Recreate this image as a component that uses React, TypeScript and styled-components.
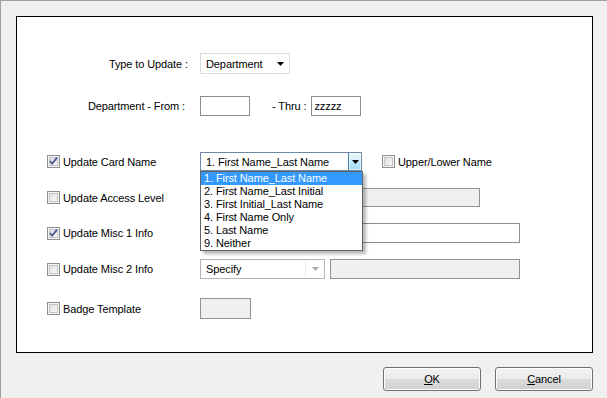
import React from "react";
import styled, { createGlobalStyle } from "styled-components";

const Global = createGlobalStyle`
  html, body { margin: 0; padding: 0; background: #f0f0f0; }
  body { font-family: "Liberation Sans", Arial, sans-serif; font-size: 11px; letter-spacing: -0.1px; color: #000; }
  * { box-sizing: border-box; }
`;

const Window = styled.div`
  width: 607px;
  height: 398px;
  border-top: 1px solid #a0a0a0;
  border-left: 1px solid #a0a0a0;
  background: #f0f0f0;
  padding: 15px 0 0 15px;
  display: flex;
  flex-direction: column;
`;

const Panel = styled.div`
  width: 577px;
  height: 337px;
  border: 1px solid #000;
  background: #fff;
  display: flex;
  flex-direction: column;
`;

const Row = styled.div<{ $mt: number; $h: number; $pl?: number }>`
  display: flex;
  align-items: center;
  margin-top: ${(p) => p.$mt}px;
  height: ${(p) => p.$h}px;
  padding-left: ${(p) => p.$pl ?? 0}px;
`;

const FieldLabel = styled.div<{ $pr: number }>`
  width: 183px;
  padding-right: ${(p) => p.$pr}px;
  text-align: right;
  white-space: nowrap;
`;

const InlineLabel = styled.div<{ $ml: number; $mr: number }>`
  margin-left: ${(p) => p.$ml}px;
  margin-right: ${(p) => p.$mr}px;
  white-space: nowrap;
`;

const CheckCell = styled.label<{ $w?: number; $ml?: number }>`
  display: flex;
  align-items: center;
  gap: 3px;
  width: ${(p) => (p.$w ? `${p.$w}px` : "auto")};
  margin-left: ${(p) => p.$ml ?? 0}px;
  white-space: nowrap;
`;

const BoxWrap = styled.span`
  display: inline-flex;
  width: 13px;
  height: 13px;
  flex: none;
`;

const PlainSelect = styled.div`
  width: 90px;
  height: 21px;
  border: 1px solid #dcdcdc;
  background: #fff;
  display: flex;
  align-items: center;
  justify-content: space-between;
  padding: 0 5px 0 5px;
`;

const TextBox = styled.div<{ $w: number; $h: number; $disabled?: boolean; $ml?: number }>`
  width: ${(p) => p.$w}px;
  height: ${(p) => p.$h}px;
  margin-left: ${(p) => p.$ml ?? 0}px;
  border: 1px solid ${(p) => (p.$disabled ? "#8f9398" : "#8a8d92")};
  background: ${(p) => (p.$disabled ? "#f0f0f0" : "#fff")};
  display: flex;
  align-items: center;
  padding-left: 2px;
`;

const ComboWrap = styled.div`
  position: relative;
  width: 162px;
  height: 19px;
`;

const OpenCombo = styled.div`
  width: 100%;
  height: 100%;
  border: 1px solid #6c8aa6;
  background: #fff;
  display: flex;
  align-items: stretch;
`;

const ComboText = styled.div`
  flex: 1;
  display: flex;
  align-items: center;
  padding-left: 5px;
  white-space: nowrap;
`;

const ComboButton = styled.div`
  width: 13px;
  border-left: 1px solid #3c7fb1;
  background: linear-gradient(#eaf6fd 0%, #d7effc 45%, #bde6fd 50%, #a6d9f4 100%);
  display: flex;
  align-items: center;
  justify-content: center;
  box-shadow: inset 0 0 0 1px rgba(255, 255, 255, 0.6);
`;

const DropList = styled.ul`
  position: absolute;
  top: 100%;
  left: 0;
  width: 163px;
  margin: 0;
  padding: 0;
  list-style: none;
  background: #fff;
  border: 1px solid #646464;
  box-shadow: 3px 3px 3px rgba(0, 0, 0, 0.28);
  z-index: 5;
`;

const DropItem = styled.li<{ $active?: boolean }>`
  height: 13px;
  line-height: 13px;
  padding-left: 3px;
  white-space: nowrap;
  background: ${(p) => (p.$active ? "#3399ff" : "transparent")};
  color: ${(p) => (p.$active ? "#fff" : "#000")};
`;

const DisabledCombo = styled.div`
  width: 125px;
  height: 20px;
  border: 1px solid #b4b4b4;
  background: #fff;
  display: flex;
  align-items: stretch;
`;

const DisabledButton = styled.div`
  width: 19px;
  border-left: 1px solid #ececec;
  display: flex;
  align-items: center;
  justify-content: center;
`;

const Footer = styled.div`
  display: flex;
  gap: 14px;
  width: 577px;
  justify-content: flex-end;
  margin-top: 14px;
`;

const Button = styled.button`
  width: 98px;
  height: 24px;
  border: 1px solid #707070;
  border-radius: 3px;
  background: linear-gradient(#f2f2f2 0%, #ebebeb 48%, #dddddd 52%, #cfcfcf 100%);
  box-shadow: inset 0 0 0 1px #fcfcfc;
  font-family: "Liberation Sans", Arial, sans-serif;
  font-size: 11px;
  letter-spacing: -0.1px;
  color: #000;
  padding: 0;
  u { text-decoration: underline; }
`;

const Check = ({ checked }: { checked?: boolean }) => (
  <BoxWrap>
    <svg width="13" height="13" viewBox="0 0 13 13">
      <defs>
        <linearGradient id="cbg" x1="0" y1="0" x2="1" y2="1">
          <stop offset="0" stopColor="#dcdcdc" />
          <stop offset="1" stopColor="#fbfbfb" />
        </linearGradient>
      </defs>
      <rect x="0.5" y="0.5" width="12" height="12" fill="#f4f4f4" stroke="#8e8f8f" />
      <rect x="2.5" y="2.5" width="8" height="8" fill="url(#cbg)" stroke="#c6c6c6" />
      {checked && (
        <path d="M3 6.2 L5.2 8.6 L10 2.6" fill="none" stroke="#4a5f97" strokeWidth="1.8" />
      )}
    </svg>
  </BoxWrap>
);

const Arrow = ({ color = "#000" }: { color?: string }) => (
  <svg width="7" height="4" viewBox="0 0 7 4">
    <path d="M0 0 H7 L3.5 4 Z" fill={color} />
  </svg>
);

const options = [
  "1. First Name_Last Name",
  "2. First Name_Last Initial",
  "3. First Initial_Last Name",
  "4. First Name Only",
  "5. Last Name",
  "9. Neither",
];

export default function App() {
  return (
    <>
      <Global />
      <Window>
        <Panel>
          <Row $mt={36} $h={21}>
            <FieldLabel $pr={12}>Type to Update :</FieldLabel>
            <PlainSelect>
              <span>Department</span>
              <Arrow />
            </PlainSelect>
          </Row>
          <Row $mt={22} $h={20}>
            <FieldLabel $pr={15}>Department - From :</FieldLabel>
            <TextBox $w={50} $h={20} />
            <InlineLabel $ml={22} $mr={5}>- Thru :</InlineLabel>
            <TextBox $w={50} $h={20}>zzzzz</TextBox>
          </Row>
          <Row $mt={36} $h={19} $pl={30}>
            <CheckCell $w={153}>
              <Check checked />
              Update Card Name
            </CheckCell>
            <ComboWrap>
              <OpenCombo>
                <ComboText>1. First Name_Last Name</ComboText>
                <ComboButton>
                  <Arrow />
                </ComboButton>
              </OpenCombo>
              <DropList>
                {options.map((o, i) => (
                  <DropItem key={o} $active={i === 0}>
                    {o}
                  </DropItem>
                ))}
              </DropList>
            </ComboWrap>
            <CheckCell $ml={20}>
              <Check />
              Upper/Lower Name
            </CheckCell>
          </Row>
          <Row $mt={17} $h={19} $pl={30}>
            <CheckCell $w={153}>
              <Check />
              Update Access Level
            </CheckCell>
            <DisabledCombo />
            <TextBox $w={150} $h={19} $disabled $ml={5} />
          </Row>
          <Row $mt={16} $h={20} $pl={30}>
            <CheckCell $w={153}>
              <Check checked />
              Update Misc 1 Info
            </CheckCell>
            <DisabledCombo />
            <TextBox $w={190} $h={20} $ml={5} />
          </Row>
          <Row $mt={16} $h={20} $pl={30}>
            <CheckCell $w={153}>
              <Check />
              Update Misc 2 Info
            </CheckCell>
            <DisabledCombo>
              <ComboText>Specify</ComboText>
              <DisabledButton>
                <Arrow color="#a8a8a8" />
              </DisabledButton>
            </DisabledCombo>
            <TextBox $w={190} $h={20} $disabled $ml={5} />
          </Row>
          <Row $mt={19} $h={21} $pl={30}>
            <CheckCell $w={153}>
              <Check />
              Badge Template
            </CheckCell>
            <TextBox $w={51} $h={21} $disabled />
          </Row>
        </Panel>
        <Footer>
          <Button>
            <u>O</u>K
          </Button>
          <Button>
            <u>C</u>ancel
          </Button>
        </Footer>
      </Window>
    </>
  );
}
